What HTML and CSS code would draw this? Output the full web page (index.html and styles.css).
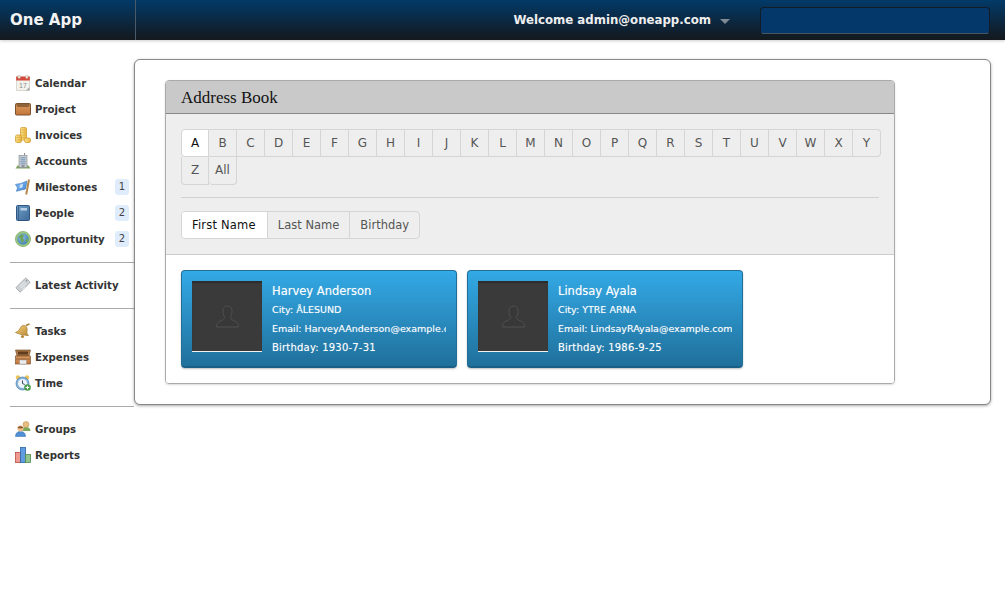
FILE: index.html
```html
<!DOCTYPE html>
<html lang="en">
<head>
    <meta charset="UTF-8">
    <meta name="viewport" content="width=device-width, initial-scale=1.0">
    <title>One App</title>
    <link rel="stylesheet" href="styles.css">
</head>
<body>
    <!-- Shared gradients for the nav icons -->
    <svg class="icon-defs" aria-hidden="true">
        <defs>
            <linearGradient id="wood" x1="0" y1="0" x2="0" y2="1"><stop offset="0" stop-color="#d99a60"/><stop offset="1" stop-color="#c4763a"/></linearGradient>
            <linearGradient id="coin" x1="0" y1="0" x2="1" y2="0"><stop offset="0" stop-color="#fbe48f"/><stop offset="1" stop-color="#eab53c"/></linearGradient>
            <linearGradient id="book" x1="0" y1="0" x2="1" y2="1"><stop offset="0" stop-color="#6d9bc8"/><stop offset="1" stop-color="#3f6c99"/></linearGradient>
            <linearGradient id="bell" x1="0" y1="0" x2="1" y2="1"><stop offset="0" stop-color="#f0cf7a"/><stop offset="1" stop-color="#bd8a35"/></linearGradient>
            <radialGradient id="globe" cx=".4" cy=".35" r=".7"><stop offset="0" stop-color="#8fc1e6"/><stop offset="1" stop-color="#3e7fb5"/></radialGradient>
            <linearGradient id="flag" x1="0" y1="0" x2="1" y2="1"><stop offset="0" stop-color="#8cc0f2"/><stop offset="1" stop-color="#3f86d6"/></linearGradient>
        </defs>
    </svg>

    <!-- Top bar -->
    <header class="topbar">
        <div class="brand">One App</div>
        <div class="topbar-right">
            <div class="welcome">Welcome admin@oneapp.com</div>
            <span class="caret"></span>
            <input class="search" type="text">
        </div>
    </header>

    <div class="page">
        <!-- Sidebar -->
        <nav class="sidebar">
            <ul class="nav-group">
                <li class="nav-item">
                    <svg class="nav-icon" viewBox="0 0 16 16"><rect x="1.500" y="2" width="13" height="13.500" fill="#f4f2ec" stroke="#c4c1b8" stroke-width=".6"/><rect x="1.200" y="1.500" width="13.600" height="4" fill="#d5483b"/><rect x="3" y="0" width="2.400" height="3.600" rx="1" fill="#efe9dc" stroke="#a9a396" stroke-width=".4"/><rect x="10.600" y="0" width="2.400" height="3.600" rx="1" fill="#efe9dc" stroke="#a9a396" stroke-width=".4"/><text x="4" y="12.500" class="cal-day">17</text><path d="M11 15.500l3.500-3.500v3.500z" fill="#a8a8a8"/></svg>
                    <span class="nav-label">Calendar</span>
                </li>
                <li class="nav-item">
                    <svg class="nav-icon" viewBox="0 0 16 16"><rect x=".5" y="2.500" width="15" height="11.500" rx="1" fill="url(#wood)" stroke="#7a5330"/><path d="M1 3h14l-1.500 3h-11z" fill="#8f6238"/></svg>
                    <span class="nav-label">Project</span>
                </li>
                <li class="nav-item">
                    <svg class="nav-icon" viewBox="0 0 16 16"><rect x="5.500" y=".5" width="6" height="12.500" rx="1.200" fill="url(#coin)" stroke="#cf9a2e" stroke-width=".7"/><path d="M5.700 3h5.600M5.700 5.500h5.600M5.700 8h5.600M5.700 10.500h5.600" stroke="#d8a93f" stroke-width=".6"/><rect x=".5" y="8" width="6" height="7.500" rx="1.500" fill="url(#coin)" stroke="#cf9a2e" stroke-width=".7"/><path d="M.8 10.500h5.400M.8 13h5.400" stroke="#d8a93f" stroke-width=".6"/><rect x="9.500" y="11" width="6" height="4.500" rx="1.500" fill="url(#coin)" stroke="#cf9a2e" stroke-width=".7"/></svg>
                    <span class="nav-label">Invoices</span>
                </li>
                <li class="nav-item">
                    <svg class="nav-icon" viewBox="0 0 16 16"><path d="M.5 15.500l2-3h11l2 3z" fill="#7fa55e"/><rect x="4" y="2.500" width="8" height="12" fill="#c9ced3" stroke="#7f848a" stroke-width=".6"/><path d="M5.500 4.800h5M5.500 6.800h5M5.500 8.800h5M5.500 10.800h5" stroke="#6f94b8"/><rect x="6.500" y="12" width="3" height="2.500" fill="#8d9399"/><path d="M9.500 0v2.500" stroke="#8a8a8a"/></svg>
                    <span class="nav-label">Accounts</span>
                </li>
                <li class="nav-item">
                    <svg class="nav-icon" viewBox="0 0 16 16"><path d="M.5 5.500c3-1 5-.5 6.500-1.500l5-2-1.500 8c-2 1-4 .5-6 1.500l-3 .8 1-3.500z" fill="url(#flag)" stroke="#3a73b5" stroke-width=".6"/><path d="M5 5.800l3-1.100-.6 3.800-3 .8z" fill="#cfe4f8"/><path d="M14 .5l-2.800 15" stroke="#b6894f" stroke-width="2"/></svg>
                    <span class="nav-label">Milestones</span>
                    <span class="nav-count">1</span>
                </li>
                <li class="nav-item">
                    <svg class="nav-icon" viewBox="0 0 16 16"><rect x="1.500" y=".5" width="13" height="15" rx="1" fill="url(#book)" stroke="#2f5680"/><path d="M3.500 1v14" stroke="#34597f" stroke-width=".8"/><rect x="5.500" y="3" width="6.500" height="2.500" fill="#b7d0e8"/></svg>
                    <span class="nav-label">People</span>
                    <span class="nav-count">2</span>
                </li>
                <li class="nav-item">
                    <svg class="nav-icon" viewBox="0 0 16 16"><circle cx="8" cy="8" r="7.600" fill="#9fcb7c" stroke="#6a9a55" stroke-width=".6"/><circle cx="8" cy="8" r="5.800" fill="url(#globe)"/><path d="M3.500 6l3-3 2.500 1.500-1 2.500 1 2.500-1.500 2.500-1.500-2-.5-2zM10.500 9l2.300-1.500.5 2-1.800 2.200z" fill="#6fa35c"/></svg>
                    <span class="nav-label">Opportunity</span>
                    <span class="nav-count">2</span>
                </li>
            </ul>
            <ul class="nav-group">
                <li class="nav-item">
                    <svg class="nav-icon" viewBox="0 0 16 16"><path d="M1.500 10L10 1.500c.6-.5 1-.5 1.500 0l3 3c.5.500.5 1 0 1.500L6 14.500c-.5.500-1 .5-1.500 0l-3-3c-.5-.5-.5-1 0-1.500z" fill="#cdd1d5" stroke="#92969a" stroke-width=".7"/><path d="M4.500 9.500l5-4.500M6 11l5-4.500M7.500 12.500l3-2.700" stroke="#f5f5f5" stroke-width=".8"/><circle cx="11.500" cy="3.800" r=".8" fill="#8d9195"/></svg>
                    <span class="nav-label">Latest Activity</span>
                </li>
            </ul>
            <ul class="nav-group">
                <li class="nav-item">
                    <svg class="nav-icon" viewBox="0 0 16 16"><path d="M.5 9.500c3-1 4-3 5-5s3.500-2.500 5-1.500 2 3 1.500 5 .5 4 1.500 4.500c-3 0-9-1-13-3z" fill="url(#bell)" stroke="#a37a2f" stroke-width=".7"/><path d="M11 2.500L14.500.8" stroke="#a37a2f" stroke-width="1.400"/><circle cx="7.500" cy="13.500" r="1.600" fill="#b88a3a"/></svg>
                    <span class="nav-label">Tasks</span>
                </li>
                <li class="nav-item">
                    <svg class="nav-icon" viewBox="0 0 16 16"><path d="M.5 1h15l-1.500 6h-12z" fill="#b07c48" stroke="#6b4522" stroke-width=".6"/><rect x="3" y="2.500" width="10" height="3" fill="#5f3d1e"/><rect x=".5" y="7" width="15" height="8" fill="url(#wood)" stroke="#6b4522" stroke-width=".6"/><path d="M1 10h14" stroke="#7a5330" stroke-width=".7"/><rect x="4.500" y="11" width="7" height="4" fill="#ececec" stroke="#8b8b8b" stroke-width=".4"/></svg>
                    <span class="nav-label">Expenses</span>
                </li>
                <li class="nav-item">
                    <svg class="nav-icon" viewBox="0 0 16 16"><circle cx="3" cy="2.500" r="2.200" fill="#e9c35b"/><circle cx="12" cy="2.500" r="2.200" fill="#e9c35b"/><circle cx="7.500" cy="8.500" r="6.500" fill="#82b2de" stroke="#4c7ea8" stroke-width=".7"/><circle cx="7.500" cy="8.500" r="4.600" fill="#edf3f8"/><path d="M7.500 5.500v3l2.200 1" stroke="#34495e" fill="none"/><circle cx="12.500" cy="12.500" r="3.300" fill="#4a9a4c"/><path d="M12.500 10.700v3.600M10.700 12.500h3.600" stroke="#fff"/></svg>
                    <span class="nav-label">Time</span>
                </li>
            </ul>
            <ul class="nav-group nav-group-last">
                <li class="nav-item">
                    <svg class="nav-icon" viewBox="0 0 16 16"><path d="M7 10c0-2.500 1.500-4 4-4s4.500 1.500 4.500 4z" fill="#7ba95a"/><circle cx="11" cy="3.500" r="3" fill="#e8bd80" stroke="#b98a48" stroke-width=".5"/><path d="M.5 15.500c0-3.500 2-5 5-5s5 1.500 5 5z" fill="#4f8fd6" stroke="#356aa6" stroke-width=".5"/><circle cx="5.500" cy="7.500" r="3" fill="#eec08e"/><path d="M2.500 7c.5-2.500 5-2.500 6 0-2 .5-4 .5-6 0z" fill="#8a5a32"/></svg>
                    <span class="nav-label">Groups</span>
                </li>
                <li class="nav-item">
                    <svg class="nav-icon" viewBox="0 0 16 16"><rect x=".5" y="5.500" width="5" height="10" fill="#ee9a90" stroke="#bb4b43" stroke-width=".8"/><rect x="5.500" y=".5" width="5" height="15" fill="#5f9ce0" stroke="#2f66a6" stroke-width=".8"/><rect x="10.500" y="7.500" width="5" height="8" fill="#93c48e" stroke="#4f8a50" stroke-width=".8"/></svg>
                    <span class="nav-label">Reports</span>
                </li>
            </ul>
        </nav>

        <!-- Main content -->
        <main class="panel">
            <section class="widget">
                <h2 class="widget-title">Address Book</h2>
                <div class="widget-filters">
                    <div class="letters">
                        <a class="letter active">A</a><a class="letter">B</a><a class="letter">C</a><a class="letter">D</a><a class="letter">E</a><a class="letter">F</a><a class="letter">G</a><a class="letter">H</a><a class="letter">I</a><a class="letter">J</a><a class="letter">K</a><a class="letter">L</a><a class="letter">M</a><a class="letter">N</a><a class="letter">O</a><a class="letter">P</a><a class="letter">Q</a><a class="letter">R</a><a class="letter">S</a><a class="letter">T</a><a class="letter">U</a><a class="letter">V</a><a class="letter">W</a><a class="letter">X</a><a class="letter last-top">Y</a><a class="letter first-bottom">Z</a><a class="letter last-bottom">All</a>
                    </div>
                    <hr class="divider">
                    <div class="sort-tabs">
                        <a class="sort-tab active">First Name</a>
                        <a class="sort-tab">Last Name</a>
                        <a class="sort-tab">Birthday</a>
                    </div>
                </div>
                <div class="cards">
                    <article class="card">
                        <div class="avatar">
                            <svg class="avatar-icon" viewBox="0 0 25 23"><path d="M12.500 1c3 0 4.500 1.800 4.500 5 0 2.500-.8 5-1.800 6.500 0 1.500 1.800 2.500 4.300 3.500 2.500 1 4 2.500 4 6H1.500c0-3.500 1.500-5 4-6s4.300-2 4.300-3.500C8.800 11 8 8.500 8 6c0-3.200 1.500-5 4.500-5z"/></svg>
                        </div>
                        <div class="card-info">
                            <div class="card-name">Harvey Anderson</div>
                            <div class="card-line">City: ÅLESUND</div>
                            <div class="card-line">Email: HarveyAAnderson@example.com</div>
                            <div class="card-line card-birthday">Birthday: 1930-7-31</div>
                        </div>
                    </article>
                    <article class="card">
                        <div class="avatar">
                            <svg class="avatar-icon" viewBox="0 0 25 23"><path d="M12.500 1c3 0 4.500 1.800 4.500 5 0 2.500-.8 5-1.800 6.500 0 1.500 1.800 2.500 4.300 3.500 2.500 1 4 2.500 4 6H1.500c0-3.500 1.500-5 4-6s4.300-2 4.300-3.500C8.800 11 8 8.500 8 6c0-3.200 1.500-5 4.500-5z"/></svg>
                        </div>
                        <div class="card-info">
                            <div class="card-name">Lindsay Ayala</div>
                            <div class="card-line">City: YTRE ARNA</div>
                            <div class="card-line">Email: LindsayRAyala@example.com</div>
                            <div class="card-line card-birthday">Birthday: 1986-9-25</div>
                        </div>
                    </article>
                </div>
            </section>
        </main>
    </div>
</body>
</html>
```
FILE: styles.css
```css
/* Base */
* {
    box-sizing: border-box;
}

body {
    margin: 0;
    font-family: "DejaVu Sans", sans-serif;
    font-size: 12px;
    color: #333;
    background-color: #fff;
}

.icon-defs {
    position: absolute;
    width: 0;
    height: 0;
}

/* Top bar */
.topbar {
    height: 40px;
    display: flex;
    justify-content: space-between;
    background: linear-gradient(#023a68, #14181d);
    box-shadow: 0 1px 3px rgba(0, 0, 0, 0.2);
}

.brand {
    width: 136px;
    padding-left: 10px;
    border-right: 1px solid #4b5a68;
    font-size: 15px;
    font-weight: bold;
    line-height: 40px;
    color: #f2f2f2;
}

.topbar-right {
    display: flex;
    align-items: center;
    padding-right: 15px;
}

.welcome {
    font-size: 11.75px;
    font-weight: bold;
    color: #eee;
}

.caret {
    width: 0;
    height: 0;
    margin: 2px 30px 0 9px;
    border-left: 5px solid transparent;
    border-right: 5px solid transparent;
    border-top: 5px solid #7f8a94;
}

.search {
    width: 230px;
    height: 27px;
    background-color: #04386a;
    border: 1px solid #111c28;
    border-bottom-color: #4a5562;
    border-radius: 4px;
}

/* Layout */
.page {
    display: flex;
    align-items: flex-start;
    padding-top: 19px;
}

/* Sidebar */
.sidebar {
    width: 134px;
    flex-shrink: 0;
    padding: 11px 0 0 10px;
}

.nav-group {
    list-style: none;
    margin: 0 0 9px;
    padding: 0 0 10px;
    border-bottom: 1px solid #aaa;
}

.nav-group-last {
    border-bottom: none;
}

.nav-item {
    height: 26px;
    display: flex;
    align-items: center;
    padding-left: 5px;
    padding-right: 5px;
}

.nav-icon {
    width: 16px;
    height: 16px;
    flex-shrink: 0;
    margin-right: 4px;
}

.cal-day {
    font-family: "Liberation Sans", sans-serif;
    font-size: 7px;
    fill: #8b8b8b;
}

.nav-label {
    flex: 1;
    font-size: 10.2px;
    font-weight: bold;
    color: #333;
    white-space: nowrap;
}

.nav-count {
    width: 14px;
    height: 16px;
    font-size: 10px;
    line-height: 16px;
    text-align: center;
    color: #444;
    background-color: #dfecfb;
    border-radius: 3px;
}

/* Main panel */
.panel {
    width: 857px;
    padding: 20px 30px;
    background-color: #fff;
    border: 1px solid #888;
    border-radius: 6px;
    box-shadow: 0 1px 3px rgba(0, 0, 0, 0.35);
}

.widget {
    width: 730px;
    border: 1px solid #aaa;
    border-radius: 4px;
    box-shadow: 0 1px 2px rgba(0, 0, 0, 0.15);
    overflow: hidden;
}

.widget-title {
    height: 33px;
    margin: 0;
    padding-left: 15px;
    font-family: "Liberation Serif", serif;
    font-size: 17px;
    font-weight: normal;
    line-height: 33px;
    color: #111;
    background-color: #c9c9c9;
    border-bottom: 1px solid #888;
}

.widget-filters {
    height: 141px;
    padding: 15px 15px 0;
    background-color: #eee;
    border-bottom: 1px solid #ccc;
}

/* Letter filter */
.letters {
    display: flex;
    flex-wrap: wrap;
    width: 701px;
}

.letter {
    width: 28px;
    height: 28px;
    font-size: 12px;
    line-height: 26px;
    text-align: center;
    color: #555;
    border: 1px solid #d5d5d5;
    border-left-width: 0;
}

.letter.active {
    color: #111;
    background-color: #fff;
    border-left-width: 1px;
    border-radius: 4px 0 0 4px;
}

.letter.last-top {
    border-radius: 0 4px 4px 0;
}

.letter.first-bottom {
    border-left-width: 1px;
    border-top-width: 0;
    border-radius: 0 0 0 4px;
}

.letter.last-bottom {
    border-top-width: 0;
    border-radius: 0 0 4px 4px;
}

.divider {
    width: 698px;
    height: 1px;
    margin: 12px 0 13px;
    border: none;
    background-color: #d0d0d0;
}

/* Sort tabs */
.sort-tabs {
    display: inline-flex;
    height: 28px;
    border: 1px solid #d5d5d5;
    border-radius: 4px;
}

.sort-tab {
    padding: 0 10px;
    font-size: 11.5px;
    line-height: 26px;
    color: #555;
    border-left: 1px solid #d5d5d5;
}

.sort-tab:first-child {
    border-left: none;
}

.sort-tab.active {
    padding-right: 11px;
    letter-spacing: 0.2px;
    color: #111;
    background-color: #fff;
    border-radius: 3px 0 0 3px;
}

/* Contact cards */
.cards {
    display: flex;
    gap: 10px;
    height: 128px;
    padding: 15px;
    background-color: #fff;
}

.card {
    width: 276px;
    height: 98px;
    display: flex;
    padding: 10px;
    color: #fff;
    background: linear-gradient(#33a9e6, #20709b);
    border: 1px solid #1f6f98;
    border-bottom: 2px solid #1a5f85;
    border-radius: 4px;
    box-shadow: 0 1px 2px rgba(0, 0, 0, 0.25);
}

.avatar {
    width: 70px;
    height: 71px;
    flex-shrink: 0;
    display: flex;
    align-items: center;
    justify-content: center;
    background-color: #3a3a3a;
    border-top: 1px solid #2c2c2c;
    border-bottom: 1px solid #f2f2f2;
    box-shadow: inset 0 1px 1px rgba(0, 0, 0, 0.25);
}

.avatar-icon {
    width: 25px;
    height: 23px;
    fill: #383838;
    stroke: #505050;
    stroke-width: 1;
}

.card-info {
    min-width: 0;
    margin-left: 10px;
    overflow: hidden;
    white-space: nowrap;
    text-shadow: 0 0 1px rgba(255, 255, 255, 0.4);
}

.card-name {
    height: 18px;
    margin-top: 1px;
    font-size: 11.5px;
    line-height: 19px;
}

.card-line {
    height: 19px;
    font-size: 9.5px;
    line-height: 19px;
}

.card-birthday {
    font-size: 10px;
    letter-spacing: 0.2px;
}
```
